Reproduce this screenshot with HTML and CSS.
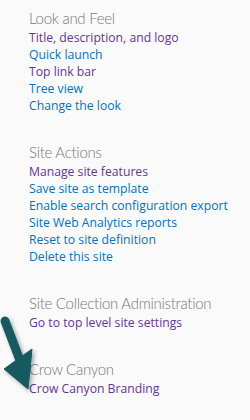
FILE: index.html
```html
<!DOCTYPE html>
<html>
<head>
    <title>Site Settings</title>
    <link rel="stylesheet" href="styles.css">
</head>
<body>
    <div class="settings">
        <div class="group">
            <h3>Look and Feel</h3>
            <ul>
                <li><a href="#" class="visited">Title, description, and logo</a></li>
                <li><a href="#">Quick launch</a></li>
                <li><a href="#" class="visited">Top link bar</a></li>
                <li><a href="#">Tree view</a></li>
                <li><a href="#">Change the look</a></li>
            </ul>
        </div>
        <div class="group">
            <h3>Site Actions</h3>
            <ul>
                <li><a href="#" class="visited">Manage site features</a></li>
                <li><a href="#">Save site as template</a></li>
                <li><a href="#">Enable search configuration export</a></li>
                <li><a href="#">Site Web Analytics reports</a></li>
                <li><a href="#">Reset to site definition</a></li>
                <li><a href="#">Delete this site</a></li>
            </ul>
        </div>
        <div class="group">
            <h3>Site Collection Administration</h3>
            <ul>
                <li><a href="#" class="visited">Go to top level site settings</a></li>
            </ul>
        </div>
        <div class="group">
            <h3>Crow Canyon</h3>
            <ul>
                <li><a href="#" class="visited">Crow Canyon Branding</a></li>
            </ul>
        </div>
    </div>

    <svg class="pointer" width="40" height="400" viewBox="0 0 40 400">
        <defs>
            <filter id="shade" x="-50%" y="-50%" width="200%" height="200%">
                <feDropShadow dx="2" dy="2" stdDeviation="2" flood-color="#000" flood-opacity="0.35"/>
            </filter>
        </defs>
        <g filter="url(#shade)" fill="#135a60" stroke="#135a60">
            <line x1="5" y1="321" x2="21" y2="363" stroke-width="9" stroke-linecap="round"/>
            <polygon points="4,369 32,349 28,389" stroke-width="1" stroke-linejoin="round"/>
        </g>
    </svg>
</body>
</html>
```

FILE: styles.css
```css
* {
    margin: 0;
    padding: 0;
    box-sizing: border-box;
}
body {
    font-family: 'Open Sans', 'Noto Sans', sans-serif;
    background: #fafafa;
    color: #444;
    position: relative;
}
.settings {
    padding: 8px 0 0 29px;
}
.group {
    margin-bottom: 28px;
}
.group h3 {
    font-family: 'Lato', 'Open Sans', sans-serif;
    font-size: 15px;
    font-weight: 300;
    letter-spacing: -0.28px;
    color: #777;
    line-height: 21px;
}
.group ul {
    list-style: none;
}
.group li {
    font-size: 12.2px;
    line-height: 17px;
}
.group a {
    color: #0072c6;
    text-decoration: none;
}
.group a.visited {
    color: #663399;
}
.pointer {
    position: absolute;
    left: 0;
    top: 0;
}
```
